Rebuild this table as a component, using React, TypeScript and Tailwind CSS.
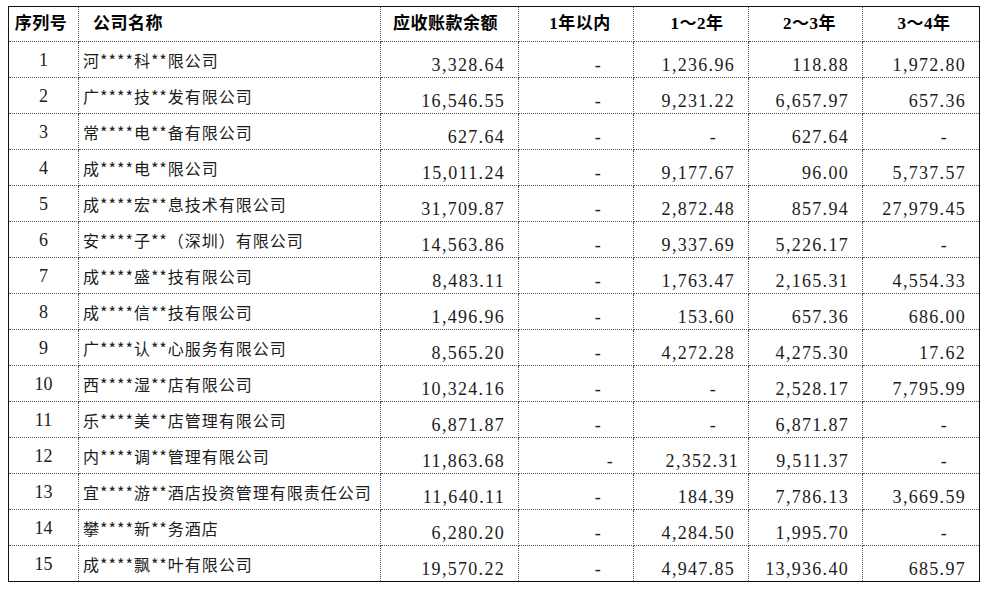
type Row = {
  no: number;
  name: string;
  total: string;
  y1: string;
  y2: string;
  y3: string;
  y4: string;
};

const rows: Row[] = [
  { no: 1, name: "河****科**限公司", total: "3,328.64", y1: "-", y2: "1,236.96", y3: "118.88", y4: "1,972.80" },
  { no: 2, name: "广****技**发有限公司", total: "16,546.55", y1: "-", y2: "9,231.22", y3: "6,657.97", y4: "657.36" },
  { no: 3, name: "常****电**备有限公司", total: "627.64", y1: "-", y2: "-", y3: "627.64", y4: "-" },
  { no: 4, name: "成****电**限公司", total: "15,011.24", y1: "-", y2: "9,177.67", y3: "96.00", y4: "5,737.57" },
  { no: 5, name: "成****宏**息技术有限公司", total: "31,709.87", y1: "-", y2: "2,872.48", y3: "857.94", y4: "27,979.45" },
  { no: 6, name: "安****子**（深圳）有限公司", total: "14,563.86", y1: "-", y2: "9,337.69", y3: "5,226.17", y4: "-" },
  { no: 7, name: "成****盛**技有限公司", total: "8,483.11", y1: "-", y2: "1,763.47", y3: "2,165.31", y4: "4,554.33" },
  { no: 8, name: "成****信**技有限公司", total: "1,496.96", y1: "-", y2: "153.60", y3: "657.36", y4: "686.00" },
  { no: 9, name: "广****认**心服务有限公司", total: "8,565.20", y1: "-", y2: "4,272.28", y3: "4,275.30", y4: "17.62" },
  { no: 10, name: "西****湿**店有限公司", total: "10,324.16", y1: "-", y2: "-", y3: "2,528.17", y4: "7,795.99" },
  { no: 11, name: "乐****美**店管理有限公司", total: "6,871.87", y1: "-", y2: "-", y3: "6,871.87", y4: "-" },
  { no: 12, name: "内****调**管理有限公司", total: "11,863.68", y1: "-", y2: "2,352.31", y3: "9,511.37", y4: "-" },
  { no: 13, name: "宜****游**酒店投资管理有限责任公司", total: "11,640.11", y1: "-", y2: "184.39", y3: "7,786.13", y4: "3,669.59" },
  { no: 14, name: "攀****新**务酒店", total: "6,280.20", y1: "-", y2: "4,284.50", y3: "1,995.70", y4: "-" },
  { no: 15, name: "成****飘**叶有限公司", total: "19,570.22", y1: "-", y2: "4,947.85", y3: "13,936.40", y4: "685.97" },
];

const serif = "font-['Liberation_Serif','Noto_Sans_CJK_SC',serif]";
const cell = "border border-dotted border-[#555]";

// Excel-style accounting cell: dashes sit further in from the edge than figures
function Amount({ value, shift }: { value: string; shift?: boolean }) {
  const dash = value === "-";
  let pad = dash ? "pr-[31px]" : "pr-[13px]";
  if (shift) pad = dash ? "pr-[19px]" : "pr-[9px]";
  return (
    <td className={`${cell} ${pad} text-right align-bottom pb-[1px] leading-[22px] text-[18px] tracking-[1.3px] ${serif}`}>
      {value}
    </td>
  );
}

export default function App() {
  return (
    <div className="min-h-[589px] w-[982px] bg-white pl-[8px] pt-[6px] text-[#1c1c1c]">
      <table className="w-[971px] table-fixed border-collapse border border-solid border-[#111]">
        <colgroup>
          <col className="w-[70px]" />
          <col className="w-[302px]" />
          <col className="w-[138px]" />
          <col className="w-[115px]" />
          <col className="w-[115px]" />
          <col className="w-[114px]" />
          <col className="w-[117px]" />
        </colgroup>
        <thead>
          <tr className="h-[35px] text-[17px] font-bold tracking-[0.5px] text-black font-['Liberation_Serif','Noto_Sans_CJK_SC',serif]">
            <th className={`${cell} text-center pr-[5px] leading-[22px]`}>序列号</th>
            <th className={`${cell} text-left pl-[14px] leading-[22px]`}>公司名称</th>
            <th className={`${cell} text-left pl-[12px] leading-[22px]`}>应收账款余额</th>
            <th className={`${cell} text-center pl-[8px] leading-[22px]`}>1年以内</th>
            <th className={`${cell} text-center pl-[12px] leading-[22px]`}>1～2年</th>
            <th className={`${cell} text-center pl-[8px] leading-[22px]`}>2～3年</th>
            <th className={`${cell} text-center pl-[6px] leading-[22px]`}>3～4年</th>
          </tr>
        </thead>
        <tbody>
          {rows.map((r) => (
            <tr key={r.no} className="h-[36px]">
              <td className={`${cell} text-center align-middle text-[18px] leading-[22px] ${serif}`}>{r.no}</td>
              <td className={`${cell} pl-[4px] align-middle text-[16px] leading-[22px] tracking-[1px] whitespace-nowrap font-['Noto_Sans_CJK_SC',sans-serif]`}>
                {r.name}
              </td>
              <Amount value={r.total} />
              <Amount value={r.y1} shift={r.no === 12} />
              <Amount value={r.y2} shift={r.no === 12} />
              <Amount value={r.y3} />
              <Amount value={r.y4} />
            </tr>
          ))}
        </tbody>
      </table>
    </div>
  );
}
